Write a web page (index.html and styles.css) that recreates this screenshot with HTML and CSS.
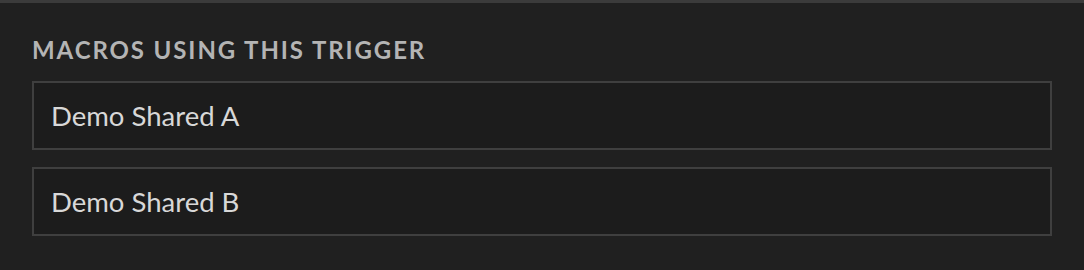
FILE: index.html
```html
<!DOCTYPE html>
<html lang="en">
<head>
  <meta charset="UTF-8">
  <meta name="viewport" content="width=device-width, initial-scale=1.0">
  <title>Macros Using This Trigger</title>
  <link rel="stylesheet" href="styles.css">
</head>
<body>
  <section class="panel">
    <h2 class="panel-title">Macros using this trigger</h2>
    <ul class="macro-list">
      <li class="macro-item">Demo Shared A</li>
      <li class="macro-item">Demo Shared B</li>
    </ul>
  </section>
</body>
</html>
```

FILE: styles.css
```css
html, body {
  margin: 0;
  padding: 0;
  background-color: #202020;
}

body {
  font-family: Lato, "Open Sans", sans-serif;
  height: 270px;
}

.panel {
  border-top: 3px solid #3b3b3b;
  padding: 33px 32px 20px 32px;
}

.panel-title {
  margin: 0 0 17px 0;
  font-size: 24px;
  font-weight: 700;
  letter-spacing: 1.9px;
  text-transform: uppercase;
  color: #b4b4b4;
  line-height: 28px;
}

.macro-list {
  list-style: none;
  margin: 0;
  padding: 0;
  display: flex;
  flex-direction: column;
  gap: 17px;
}

.macro-item {
  border: 2px solid #3f3f3f;
  background-color: #1c1c1c;
  height: 65px;
  padding: 0 17px;
  display: flex;
  align-items: center;
  font-size: 27.5px;
  color: #d8d8d8;
}
```
